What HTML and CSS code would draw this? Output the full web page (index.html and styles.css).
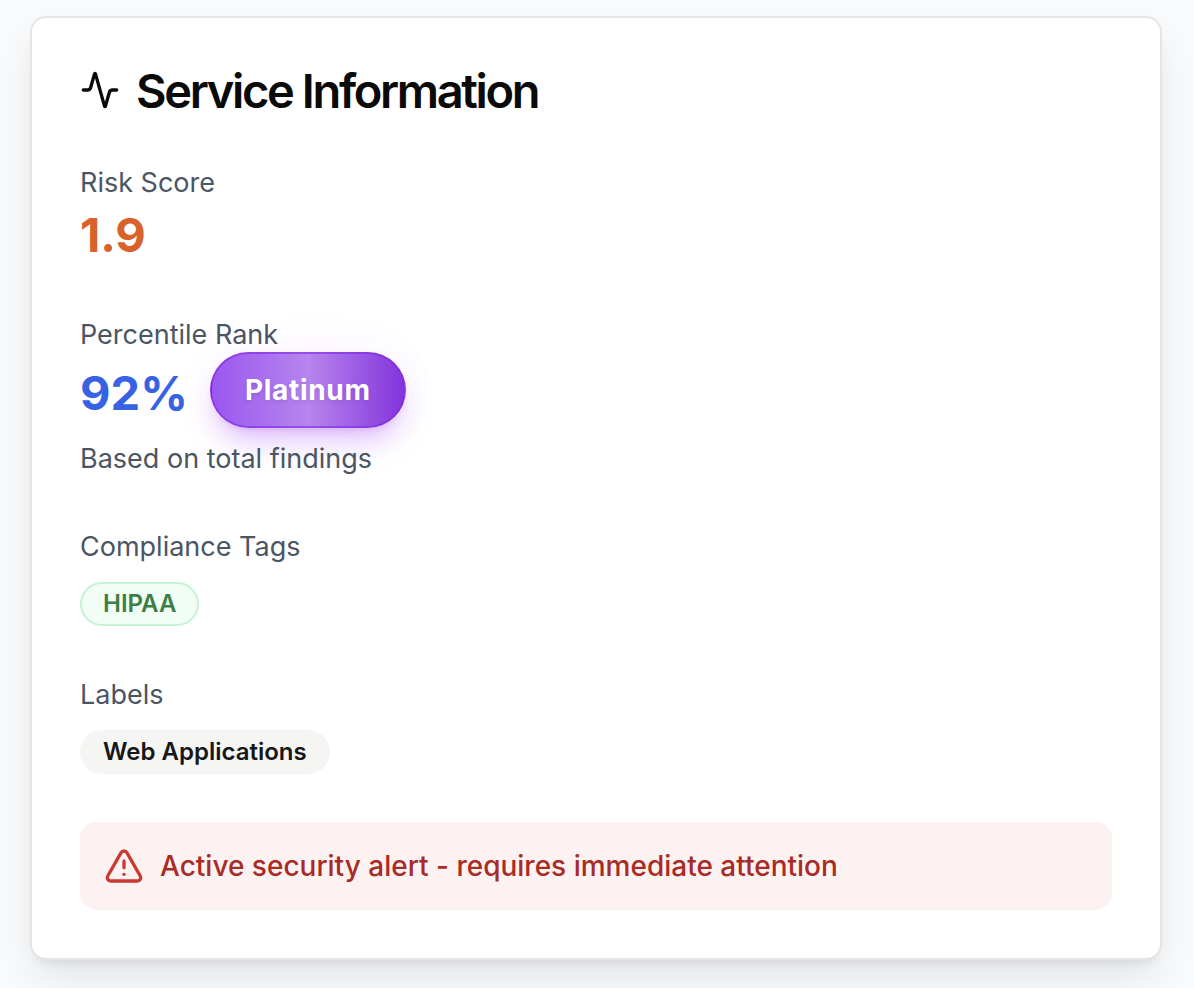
FILE: index.html
```html
<!DOCTYPE html>
<html lang="en">
<head>
<meta charset="utf-8">
<title>Service Information</title>
<link rel="stylesheet" href="styles.css">
</head>
<body>
<main class="card">
  <h1 class="title">
    <svg class="title-icon" viewBox="0 0 24 24" aria-hidden="true"><path d="M22 12h-2.48a2 2 0 0 0-1.93 1.46l-2.35 8.36a.25.25 0 0 1-.48 0L9.24 2.18a.25.25 0 0 0-.48 0l-2.35 8.36A2 2 0 0 1 4.49 12H2"/></svg>
    <span class="title-text">Service Information</span>
  </h1>
  <div class="sections">
    <section>
      <p class="label">Risk Score</p>
      <p class="value value-risk">1.9</p>
    </section>
    <section>
      <p class="label">Percentile Rank</p>
      <div class="rank">
        <p class="value value-rank">92%</p>
        <span class="tier">Platinum</span>
      </div>
      <p class="label">Based on total findings</p>
    </section>
    <section>
      <p class="label">Compliance Tags</p>
      <div class="tags"><span class="tag tag-green">HIPAA</span></div>
    </section>
    <section>
      <p class="label">Labels</p>
      <div class="tags"><span class="tag tag-gray">Web Applications</span></div>
    </section>
    <div class="alert" role="alert">
      <svg class="alert-icon" viewBox="0 0 24 24" aria-hidden="true"><path d="m21.73 18-8-14a2 2 0 0 0-3.48 0l-8 14A2 2 0 0 0 4 21h16a2 2 0 0 0 1.73-3"/><path d="M12 9v4"/><path d="M12 17h.01"/></svg>
      <span>Active security alert - requires immediate attention</span>
    </div>
  </div>
</main>
</body>
</html>
```
FILE: styles.css
```css
* { box-sizing: border-box; }

body {
  margin: 0;
  padding: 16px 32px 28px 30px;
  background: #f9fafc;
  font-family: Inter, "Liberation Sans", sans-serif;
  color: #0a0a0a;
}

h1, p { margin: 0; }

svg {
  flex: none;
  fill: none;
  stroke: currentColor;
  stroke-width: 2;
  stroke-linecap: round;
  stroke-linejoin: round;
}

.card {
  padding: 48px;
  border: 2px solid #e5e5e5;
  border-radius: 16px;
  background: #fff;
  box-shadow: 0 20px 40px -6px rgb(0 0 0 / 10%), 0 8px 12px -8px rgb(0 0 0 / 12%);
}

.title {
  display: flex;
  align-items: center;
  gap: 16px;
  font-size: 47px;
  line-height: 46px;
  font-weight: 600;
  letter-spacing: -0.05em;
}

.title-icon { width: 40px; height: 40px; }
.title-text { padding-top: 2px; }

.sections {
  display: flex;
  flex-direction: column;
  gap: 48px;
  margin-top: 48px;
}

.label {
  padding-top: 2px;
  font-size: 27px;
  line-height: 38px;
  color: #4b5563;
}

.value {
  padding-top: 2px;
  font-size: 47px;
  line-height: 62px;
  font-weight: 700;
}

.value-risk { color: #d9622b; }
.value-rank { color: #3662e3; }

.rank {
  display: flex;
  align-items: center;
  gap: 22px;
  margin: -2px 0 6px;
}

.tier {
  margin-bottom: 4px;
  padding: 16px 33px;
  border: 2px solid rgb(130 40 225 / 60%);
  border-radius: 38px;
  background: linear-gradient(90deg, #9b57ef, #b685ee 50%, #8434db);
  box-shadow: 0 18px 30px -6px rgb(168 85 247 / 32%), 0 8px 12px -8px rgb(168 85 247 / 32%), 0 0 40px rgb(168 85 247 / 5%), 10px 0 90px rgb(168 85 247 / 2%);
  color: #fff;
  font-size: 28px;
  line-height: 40px;
  font-weight: 700;
  letter-spacing: 0.025em;
  text-shadow: 0 2px 4px rgb(0 0 0 / 10%);
}

.tags {
  display: flex;
  margin-top: 16px;
}

.tag {
  padding: 4px 21px;
  border: 2px solid transparent;
  border-radius: 22px;
  font-size: 24px;
  line-height: 32px;
  font-weight: 600;
}

.tag-green {
  border-color: #c6f3d3;
  background: #f2fdf5;
  color: #3c7f46;
}

.tag-gray {
  background: #f5f5f4;
  color: #171717;
}

.alert {
  display: flex;
  align-items: center;
  gap: 16px;
  padding: 24px;
  border-radius: 16px;
  background: #fcf2f1;
  color: #a92b25;
  font-size: 28px;
  line-height: 40px;
  font-weight: 500;
}

.alert-icon {
  width: 40px;
  height: 40px;
  color: #cb3a31;
}
```
